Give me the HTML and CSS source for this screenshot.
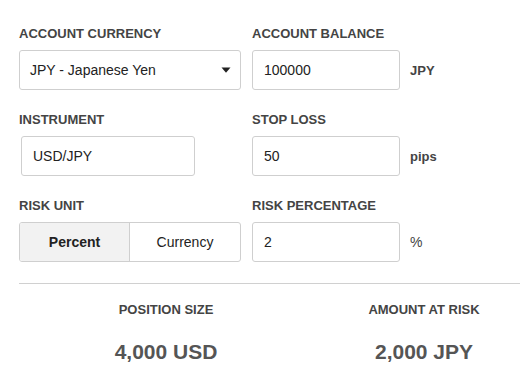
FILE: index.html
```html
<!DOCTYPE html>
<html lang="en">
<head>
<meta charset="utf-8">
<title>Position Size Calculator</title>
<link rel="stylesheet" href="styles.css">
</head>
<body>
<div class="calc">
  <div class="form">
    <div class="field">
      <div class="label">ACCOUNT CURRENCY</div>
      <div class="select">
        <span>JPY - Japanese Yen</span>
        <svg class="caret" width="10" height="6" viewBox="0 0 10 6"><path d="M0.5 0.5 H9.5 L5 5.8 Z" fill="#222"/></svg>
      </div>
    </div>
    <div class="field">
      <div class="label">ACCOUNT BALANCE</div>
      <div class="with-unit">
        <input class="input" type="text" value="100000">
        <span class="unit">JPY</span>
      </div>
    </div>
    <div class="field">
      <div class="label">INSTRUMENT</div>
      <input class="input instrument" type="text" value="USD/JPY">
    </div>
    <div class="field">
      <div class="label">STOP LOSS</div>
      <div class="with-unit">
        <input class="input" type="text" value="50">
        <span class="unit">pips</span>
      </div>
    </div>
    <div class="field">
      <div class="label">RISK UNIT</div>
      <div class="segmented">
        <div class="seg active">Percent</div>
        <div class="seg">Currency</div>
      </div>
    </div>
    <div class="field">
      <div class="label">RISK PERCENTAGE</div>
      <div class="with-unit">
        <input class="input" type="text" value="2">
        <span class="unit light">%</span>
      </div>
    </div>
  </div>
  <div class="divider"></div>
  <div class="results">
    <div class="result">
      <div class="label">POSITION SIZE</div>
      <div class="value">4,000 USD</div>
    </div>
    <div class="result">
      <div class="label">AMOUNT AT RISK</div>
      <div class="value">2,000 JPY</div>
    </div>
  </div>
</div>
</body>
</html>
```
FILE: styles.css
```css
html, body {
  margin: 0;
  padding: 0;
  background: #fff;
  overflow: hidden;
}
body {
  font-family: "Liberation Sans", Arial, sans-serif;
  color: #222;
  width: 520px;
  height: 384px;
}
.calc {
  padding: 26px 0 0 19px;
}
.form {
  display: grid;
  grid-template-columns: 222px 1fr;
  column-gap: 11px;
  row-gap: 22px;
}
.label {
  font-size: 13px;
  line-height: 16px;
  font-weight: bold;
  color: #444;
  margin-bottom: 8px;
  white-space: nowrap;
}
.select {
  box-sizing: border-box;
  height: 40px;
  border: 1px solid #cfcfcf;
  border-radius: 3px;
  display: flex;
  align-items: center;
  justify-content: space-between;
  padding: 0 9px 0 10px;
  font-size: 14px;
  color: #222;
}
.caret {
  display: block;
}
.with-unit {
  display: flex;
  align-items: center;
  gap: 10px;
}
.input {
  box-sizing: border-box;
  display: block;
  width: 148px;
  height: 40px;
  margin: 0;
  border: 1px solid #cfcfcf;
  border-radius: 3px;
  padding: 0 11px;
  font-family: "Liberation Sans", Arial, sans-serif;
  font-size: 14px;
  color: #222;
  background: #fff;
  outline: none;
}
.input.instrument {
  width: 174px;
  margin-left: 2px;
}
.unit {
  font-size: 13px;
  font-weight: bold;
  color: #444;
}
.unit.light {
  font-weight: normal;
  font-size: 14px;
}
.segmented {
  box-sizing: border-box;
  height: 40px;
  border: 1px solid #cfcfcf;
  border-radius: 3px;
  display: grid;
  grid-template-columns: 1fr 1fr;
  overflow: hidden;
}
.seg {
  display: flex;
  align-items: center;
  justify-content: center;
  font-size: 14px;
  color: #222;
}
.seg.active {
  background: #f2f2f2;
  font-weight: bold;
  border-right: 1px solid #cfcfcf;
}
.divider {
  height: 1px;
  background: #d0d0d0;
  margin-top: 21px;
}
.results {
  display: grid;
  grid-template-columns: 258px 192px;
  column-gap: 33px;
  margin-left: 18px;
  padding-top: 18px;
}
.result {
  text-align: center;
}
.result .label {
  margin-bottom: 22px;
}
.value {
  font-size: 21px;
  line-height: 24px;
  font-weight: bold;
  color: #555;
  white-space: nowrap;
}
```
